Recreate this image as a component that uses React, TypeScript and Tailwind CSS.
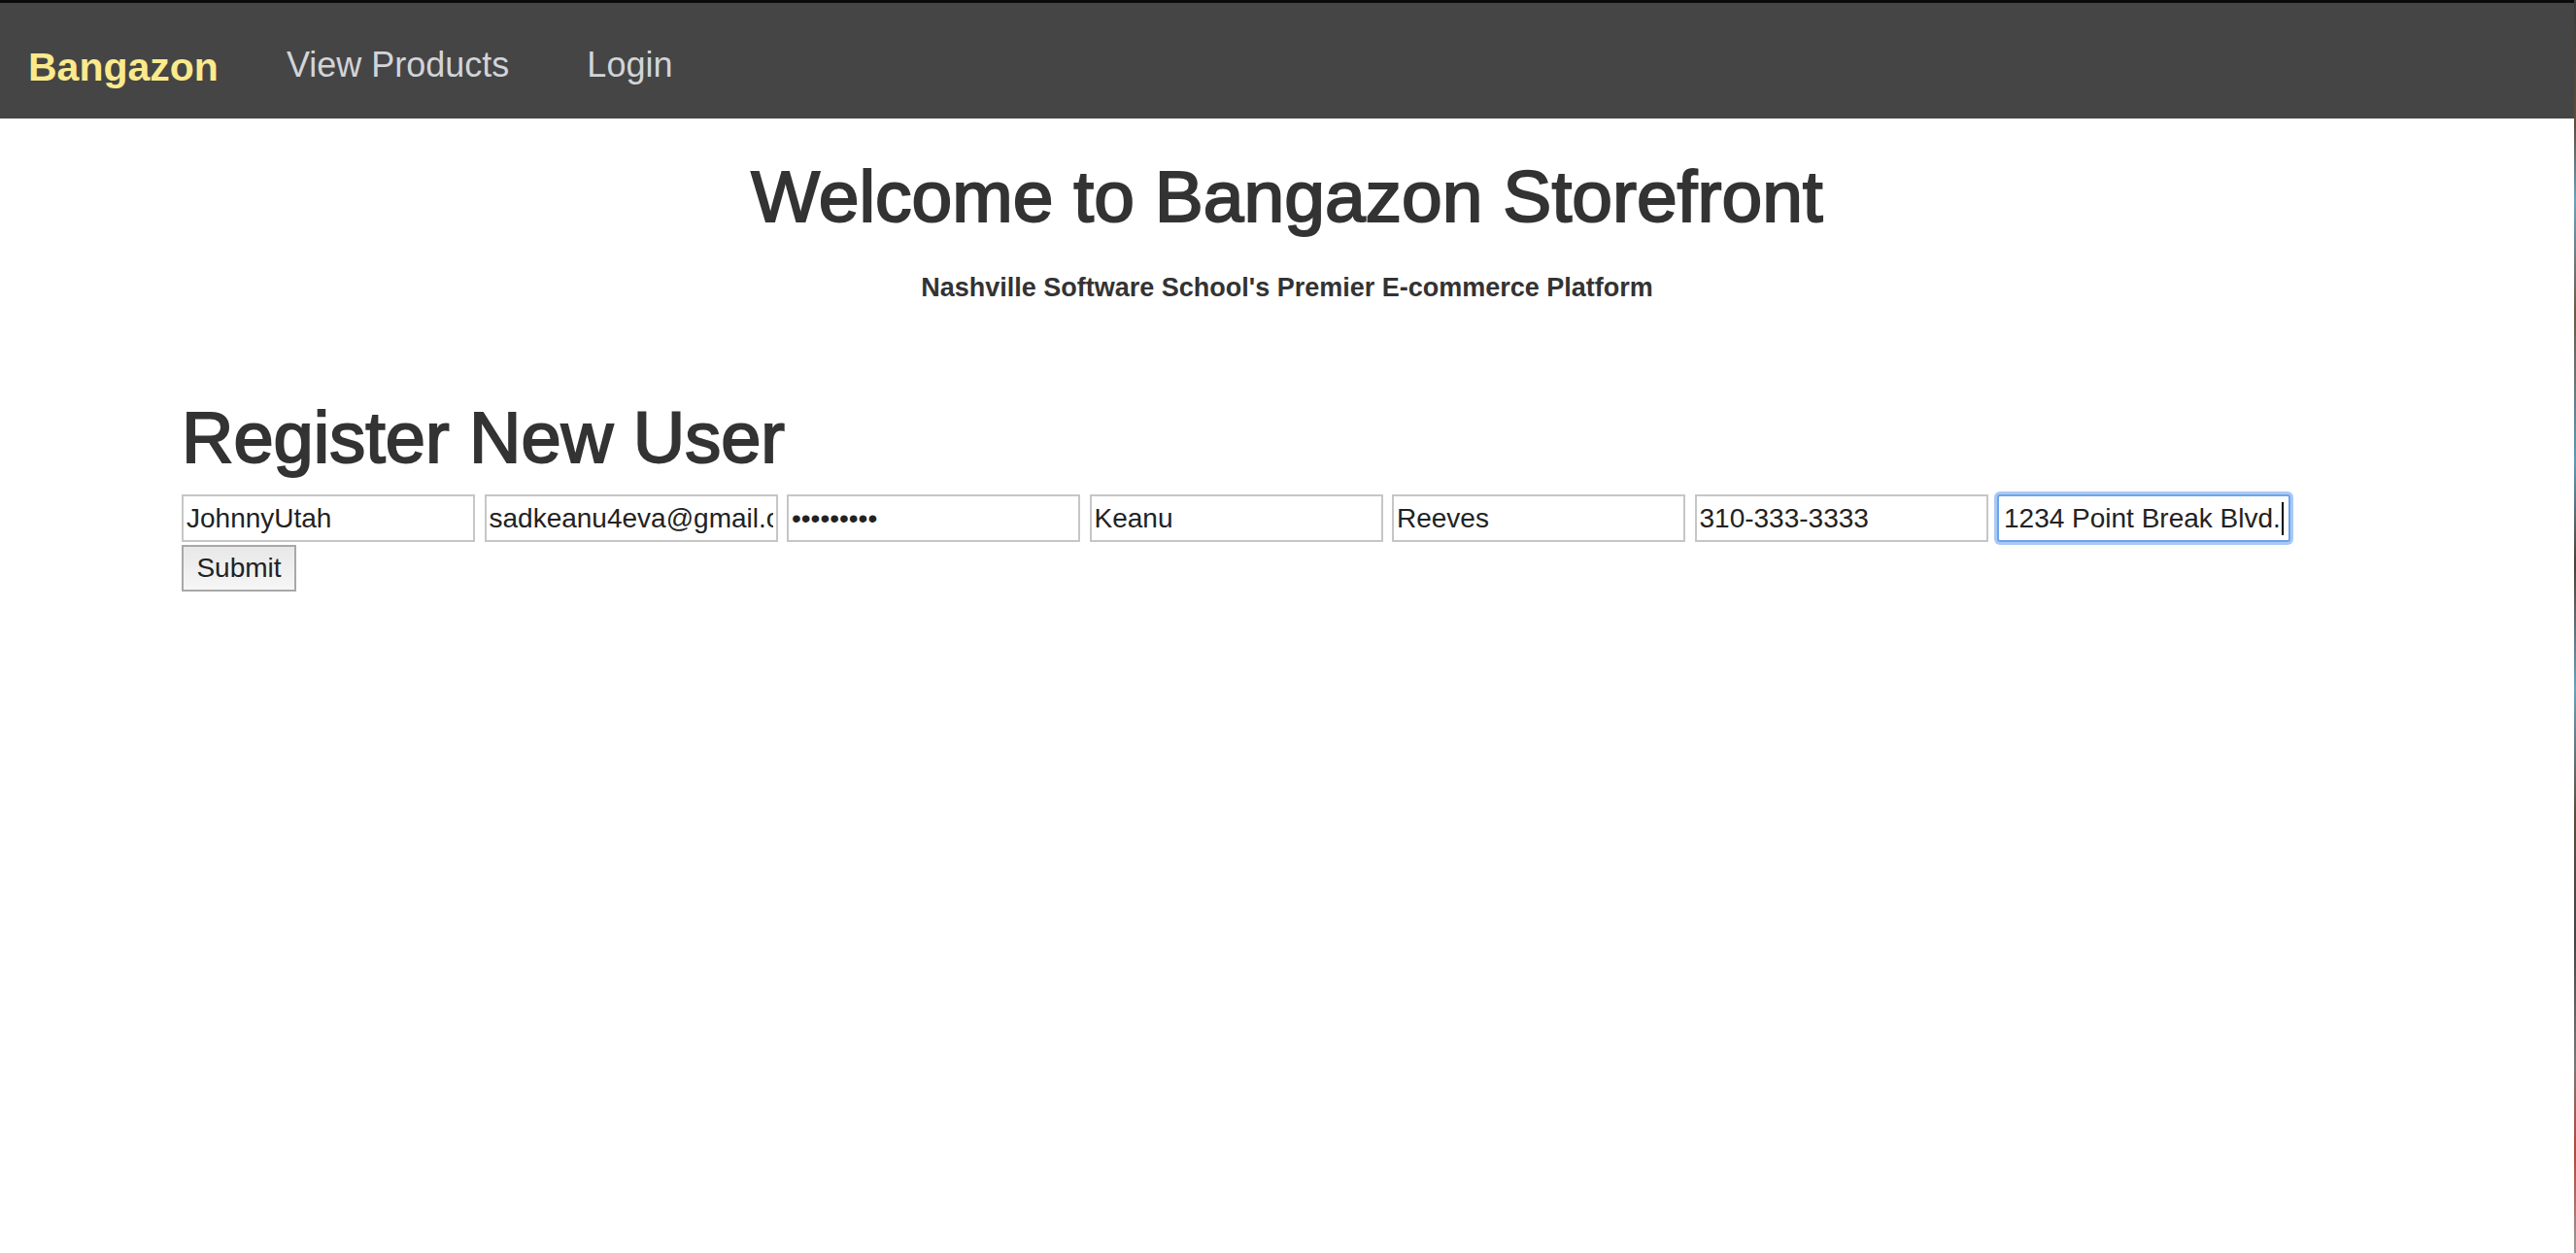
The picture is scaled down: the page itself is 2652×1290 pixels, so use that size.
import React from "react";

const fields = [
  { value: "JohnnyUtah" },
  { value: "sadkeanu4eva@gmail.com" },
  { value: "•••••••••" },
  { value: "Keanu" },
  { value: "Reeves" },
  { value: "310-333-3333" },
];

export default function App() {
  return (
    <div className="flex min-h-[1290px] w-[2652px] bg-white font-['Liberation_Sans',Arial,sans-serif]">
      <div className="flex w-[2650px] flex-col">
        <div className="h-[3px] w-full bg-[#0a0a0a]" />
        <nav className="flex h-[119px] items-start bg-[#454545] pl-[29px] pt-[46px]">
          <span className="text-[41px] font-bold leading-none text-[#fbea8c]">Bangazon</span>
          <span className="ml-[70px] text-[36px] leading-none text-[#d2d4d8]">View Products</span>
          <span className="ml-[80px] text-[36px] leading-none text-[#d2d4d8]">Login</span>
        </nav>
        <h1 className="mt-[39px] text-center text-[75px] font-medium leading-[1.1] text-[#333333] [-webkit-text-stroke:2px_#333333]">
          Welcome to Bangazon Storefront
        </h1>
        <h5 className="mt-[38px] text-center text-[27px] font-bold leading-[1.1] text-[#333333]">
          Nashville Software School's Premier E-commerce Platform
        </h5>
        <div className="flex flex-col items-start pl-[187px]">
          <h1 className="mt-[99px] text-[74px] font-medium leading-[1.1] text-[#333333] [-webkit-text-stroke:2px_#333333]">
            Register New User
          </h1>
          <div className="mt-[17px] flex gap-[9.5px]">
            {fields.map((f, i) => (
              <input
                key={i}
                type="text"
                defaultValue={f.value}
                readOnly
                className="h-[49px] w-[302px] border-2 border-[#c6c6c6] bg-white px-[3px] pt-[2px] text-[28px] text-[#222222] outline-none"
              />
            ))}
            <div className="flex h-[49px] w-[302px] items-center rounded-[3px] border-2 border-[#6ea3ec] bg-white px-[5px] pt-[2px] text-[28px] text-[#222222] shadow-[0_0_0_3px_#a9c9f3]">
              <span>1234 Point Break Blvd.</span>
              <span className="ml-[1px] h-[34px] w-[2px] bg-black" />
            </div>
          </div>
          <button
            type="button"
            className="mt-[3px] h-[48px] w-[118px] border-2 border-[#a8a8a8] bg-gradient-to-b from-[#e8e8e8] to-[#f6f6f6] text-[28px] leading-none text-[#222222]"
          >
            Submit
          </button>
        </div>
      </div>
      <div className="w-[2px] bg-[linear-gradient(to_bottom,#3c3c3c_0%,#5e4d3c_10%,#6aa0bc_16%,#6b5a44_25%,#5e98b8_37%,#4d3f33_45%,#6aa0bc_55%,#5a4b3a_65%,#444_75%,#777_85%,#b5463a_92%,#9a9a9a_100%)]" />
    </div>
  );
}
